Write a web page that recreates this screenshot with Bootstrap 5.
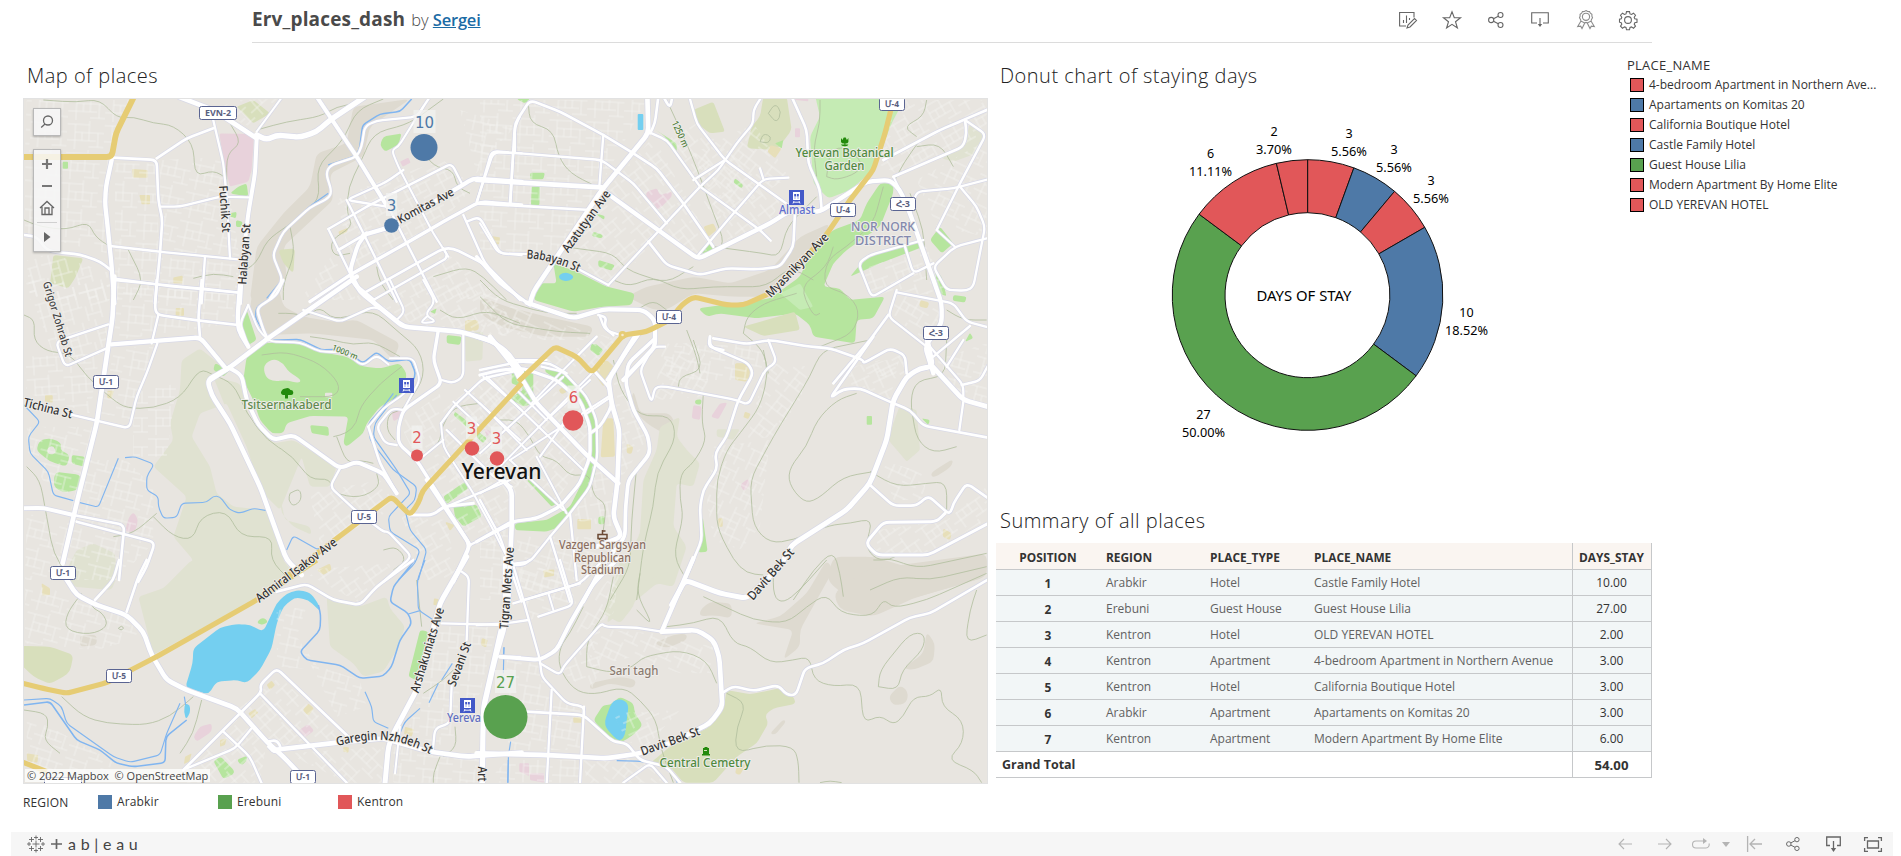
<!DOCTYPE html>
<html lang="en">
<head>
<meta charset="utf-8">
<meta name="viewport" content="width=device-width, initial-scale=1">
<title>Erv_places_dash</title>
<link href="https://cdn.jsdelivr.net/npm/bootstrap@5.3.0/dist/css/bootstrap.min.css" rel="stylesheet">
<style>
  body { font-family: "Open Sans", "Noto Sans", sans-serif; font-size: 12px; line-height: 18px; color: #333; height: 856px; overflow: hidden; }
  .dash-head { width: 1400px; height: 43px; margin-left: 252px; border-bottom: 1px solid #dcdcdc; padding-bottom: 3px; }
  .dash-title { font-size: 19px; font-weight: 700; color: #4a4a4a; letter-spacing: .15px; }
  .dash-by { font-size: 16.5px; font-weight: 300; color: #4a4a4a; }
  .dash-by a { color: #1b6ba5; font-weight: 600; letter-spacing: -.2px; }
  .tool { width: 44px; height: 24px; }
  svg { display: block; }
  .tool svg, .foot svg { fill: none; stroke: #666; stroke-width: 1.1; overflow: visible; }
  .left-col { width: 965px; margin-left: 23px; margin-right: 8px; }
  .sheet-title { font-size: 20px; font-weight: 300; color: #222; letter-spacing: .48px; height: 55px; padding: 20px 0 0 4px; line-height: 26px; margin: 0; }
  .map-box { width: 965px; height: 686px; background: #e8e5e0; overflow: hidden; }
  .ctl { left: 10px; width: 28px; background: rgba(247,247,247,.85); border: 1px solid #b9b9b9; box-shadow: 0 1px 2px rgba(0,0,0,.25); }
  .ctl svg { fill: none; stroke: #666; stroke-width: 1.3; }
  .ctl-find { top: 10px; height: 28px; }
  .ctl-zoom { top: 51px; height: 103px; }
  .credit { left: 2px; bottom: 2px; height: 13px; line-height: 13px; font-size: 11px; background: rgba(255,255,255,.75); color: #444; padding: 0 2px; white-space: pre; }
  .swatch { width: 14px; height: 14px; flex: none; }
  .sw-b { background: #4e79a7; } .sw-g { background: #59a14f; } .sw-r { background: #e15759; }
  .outlined { border: 1px solid #000; }
  .region-legend { height: 36px; color: #333; }
  .region-item { width: 120px; gap: 5px; letter-spacing: .15px; }
  .donut-col { width: 621px; }
  .name-legend { width: 264px; padding-top: 12px; margin-left: 10px; }
  .name-title { height: 20px; line-height: 20px; font-size: 13px; letter-spacing: .25px; font-weight: 500; }
  .name-legend .item { height: 20px; padding-left: 3px; gap: 5px; white-space: nowrap; }
  .summary-title { height: 43px; padding-top: 8px; }
  .sum-table { width: 655px; table-layout: fixed; border-collapse: collapse; font-size: 12px; color: #616161; }
  .sum-table tr { height: 26px; background: #f2f6f7; border-bottom: 1px solid #c6c8ca; }
  .sum-table tr > * { padding: 1px 0 0 6px; white-space: nowrap; }
  .sum-table tr > :last-child { border-left: 1px solid #c6c8ca; border-right: 1px solid #c6c8ca; text-align: center; padding-left: 0; color: #333; }
  .sum-table tr > .pos { text-align: center; padding-left: 0; }
  .sum-table thead tr { background: #faf5f1; }
  .sum-table thead tr > * { padding-top: 3px; }
  .sum-table th { color: #333; font-weight: 700; font-size: 11.9px; }
  .sum-table tfoot tr { background: #fff; }
  .foot { height: 24px; margin: 0 8px 0 11px; background: #f6f6f6; padding-left: 16px; }
  .foot-btn { width: 40px; }
  .off { opacity: .45; }
  .word { font-family: Lato, sans-serif; font-size: 16px; letter-spacing: 4.7px; color: #444; line-height: 24px; }
  #map text, #donut text { font-family: "Noto Sans", "Open Sans", sans-serif; }
  #map text.halo { paint-order: stroke; stroke: #efedea; stroke-width: 2px; stroke-linejoin: round; font-weight: 500; }
  #map text.mark-label { font-family: "DejaVu Sans", sans-serif; }
</style>
</head>
<body class="bg-white d-flex flex-column">

<header class="dash-head d-flex align-items-center justify-content-between flex-shrink-0">
  <div class="d-flex align-items-baseline" style="gap:6px">
    <span class="dash-title">Erv_places_dash</span>
    <span class="dash-by">by <a href="#">Sergei</a></span>
  </div>
  <div class="d-flex" style="margin-right:2px">
    <span class="tool d-flex align-items-center justify-content-center"><svg width="18" height="18" viewBox="0 0 18 18"><path d="M7 15H.6V1.500H15v5M4.500 12V9M7.500 12V4.500M10.500 9V7M8 17l1-3 6.500-6.500 2 2L11 16z"/></svg></span>
    <span class="tool d-flex align-items-center justify-content-center"><svg width="18" height="18" viewBox="0 0 18 18"><path d="M9 .8l2.300 6h6.200l-5 3.900 1.900 6.300L9 13.300 3.600 17l1.900-6.300-5-3.900h6.200z"/></svg></span>
    <span class="tool d-flex align-items-center justify-content-center"><svg width="16" height="16" viewBox="0 0 16 16"><circle cx="3.200" cy="8" r="2.600"/><circle cx="12.500" cy="3" r="2.500"/><circle cx="12.500" cy="13" r="2.500"/><path d="M5.500 6.800l4.800-2.600M5.500 9.200l4.800 2.600"/></svg></span>
    <span class="tool d-flex align-items-center justify-content-center"><svg width="18" height="16" viewBox="0 0 18 16"><path d="M6 11H.7V.7h16.600V11H12M9 6v8"/><path d="M6.800 12h4.400L9 15z" fill="#666" stroke="none"/></svg></span>
    <span class="tool d-flex align-items-center justify-content-center opacity-75" style="padding-left:4px"><svg width="18" height="19" viewBox="0 0 18 19"><circle cx="9" cy="6.800" r="3.600"/><path d="M9 .6l1.600.9 1.900.1.900 1.600 1.500 1.100v1.800l.6 1.700-1 1.600-.5 1.800-1.800.700-1.500 1.100L9 12.400l-1.700.6-1.500-1.100-1.800-.7-.5-1.800-1-1.600.6-1.700V4.300l1.500-1.100.9-1.600 1.900-.1zM4 11L.7 16.500l3-.3 1.300 2.300 3-6M14 11l3.300 5.500-3-.3-1.300 2.300-3-6"/></svg></span>
    <span class="tool d-flex align-items-center justify-content-center"><svg width="18" height="18" viewBox="0 0 18 18"><circle cx="9" cy="9" r="3.400"/><path d="M7.500.600h3l.5 2.300 1.500.600 2-1.300 2 2-1.300 2 .600 1.500 2.200.5v3l-2.200.5-.600 1.400 1.300 2.100-2 2-2-1.300-1.500.6-.5 2.300h-3L7 16.500l-1.500-.6-2 1.300-2-2 1.300-2.100-.6-1.400L.500 11.200v-3l1.700-.5.600-1.500-1.300-2 2-2 2 1.300L7 2.900z"/></svg></span>
  </div>
</header>

<main class="d-flex flex-shrink-0" style="height:789px">
  <section class="left-col">
    <h2 class="sheet-title">Map of places</h2>
    <div class="map-box position-relative">
      <svg id="map" width="965" height="686" viewBox="23 98 965 686"></svg>
      <div class="ctl ctl-find position-absolute d-flex align-items-center justify-content-center">
        <svg width="14" height="14" viewBox="0 0 14 14"><circle cx="8" cy="5.500" r="4.500"/><path d="M5 9l-3.800 3.500"/></svg>
      </div>
      <div class="ctl ctl-zoom position-absolute">
        <svg width="26" height="101" viewBox="0 0 26 101"><path d="M8 14h10M13 9v10M8 36h10" stroke-width="2.200" stroke="#777"/><path d="M6 58l7-6.500L20 58M8 57v7.500h10V57M11 64v-6h4v6"/><path d="M3 72.500h20" stroke="#d0d0d0" stroke-width="1"/><path d="M10 82v10l6.500-5z" fill="#666" stroke="none"/></svg>
      </div>
      <div class="credit position-absolute">© 2022 Mapbox  © OpenStreetMap</div>
    </div>
    <div class="region-legend d-flex align-items-center">
      <span style="width:75px;letter-spacing:.15px;padding-top:1px">REGION</span>
      <span class="region-item d-flex align-items-center"><i class="swatch sw-b"></i>Arabkir</span>
      <span class="region-item d-flex align-items-center"><i class="swatch sw-g"></i>Erebuni</span>
      <span class="region-item d-flex align-items-center"><i class="swatch sw-r"></i>Kentron</span>
    </div>
  </section>

  <section class="flex-grow-1">
    <div class="d-flex" style="height:457px">
      <div class="donut-col">
        <h2 class="sheet-title">Donut chart of staying days</h2>
        <svg id="donut" width="621" height="402" viewBox="996 98 621 402"></svg>
      </div>
      <div class="name-legend">
        <div class="name-title">PLACE_NAME</div>
        <div class="item d-flex align-items-center"><i class="swatch outlined sw-r"></i><span>4-bedroom Apartment in Northern Ave...</span></div>
        <div class="item d-flex align-items-center"><i class="swatch outlined sw-b"></i><span>Apartaments on Komitas 20</span></div>
        <div class="item d-flex align-items-center"><i class="swatch outlined sw-r"></i><span>California Boutique Hotel</span></div>
        <div class="item d-flex align-items-center"><i class="swatch outlined sw-b"></i><span>Castle Family Hotel</span></div>
        <div class="item d-flex align-items-center"><i class="swatch outlined sw-g"></i><span>Guest House Lilia</span></div>
        <div class="item d-flex align-items-center"><i class="swatch outlined sw-r"></i><span>Modern Apartment By Home Elite</span></div>
        <div class="item d-flex align-items-center"><i class="swatch outlined sw-r"></i><span>OLD YEREVAN HOTEL</span></div>
      </div>
    </div>
    <h2 class="sheet-title summary-title">Summary of all places</h2>
    <table class="sum-table">
      <colgroup><col style="width:104px"><col style="width:104px"><col style="width:104px"><col style="width:264px"><col style="width:79px"></colgroup>
      <thead><tr><th class="pos">POSITION</th><th>REGION</th><th>PLACE_TYPE</th><th>PLACE_NAME</th><th>DAYS_STAY</th></tr></thead>
      <tbody>
        <tr><th class="pos">1</th><td>Arabkir</td><td>Hotel</td><td>Castle Family Hotel</td><td>10.00</td></tr>
        <tr><th class="pos">2</th><td>Erebuni</td><td>Guest House</td><td>Guest House Lilia</td><td>27.00</td></tr>
        <tr><th class="pos">3</th><td>Kentron</td><td>Hotel</td><td>OLD YEREVAN HOTEL</td><td>2.00</td></tr>
        <tr><th class="pos">4</th><td>Kentron</td><td>Apartment</td><td>4-bedroom Apartment in Northern Avenue</td><td>3.00</td></tr>
        <tr><th class="pos">5</th><td>Kentron</td><td>Hotel</td><td>California Boutique Hotel</td><td>3.00</td></tr>
        <tr><th class="pos">6</th><td>Arabkir</td><td>Apartment</td><td>Apartaments on Komitas 20</td><td>3.00</td></tr>
        <tr><th class="pos">7</th><td>Kentron</td><td>Apartment</td><td>Modern Apartment By Home Elite</td><td>6.00</td></tr>
      </tbody>
      <tfoot><tr><th colspan="4" style="font-size:12.500px">Grand Total</th><th style="font-size:13.200px">54.00</th></tr></tfoot>
    </table>
  </section>
</main>

<footer class="foot d-flex align-items-center justify-content-between flex-shrink-0">
  <div class="d-flex align-items-center" style="gap:6px">
    <svg width="18" height="18" viewBox="0 0 18 18"><path d="M9 5.500v7M5.500 9h7M9 .5v4M7 2.500h4M9 13.500v4M7 15.500h4M2 7v4M0 9h4M16 7v4M14 9h4M4.500 2v5M2 4.500h5M13.500 2v5M11 4.500h5M4.500 11v5M2 13.500h5M13.500 11v5M11 13.500h5" stroke-width=".9"/></svg>
    <svg width="11" height="12" viewBox="0 0 11 12"><path d="M5.500 1v10M0 6h11" stroke-width="1.700"/></svg>
    <span class="word">ab|eau</span>
  </div>
  <div class="d-flex align-items-center">
    <span class="foot-btn off d-flex justify-content-center"><svg width="14" height="12" viewBox="0 0 14 12"><path d="M14 6H1M6 1L1 6l5 5"/></svg></span>
    <span class="foot-btn off d-flex justify-content-center"><svg width="14" height="12" viewBox="0 0 14 12"><path d="M0 6h13M8 1l5 5-5 5"/></svg></span>
    <span class="off d-flex justify-content-center" style="width:31px"><svg width="18" height="12" viewBox="0 0 18 12"><path d="M13 3H4a3.500 3.500 0 000 7h10a3.300 3.300 0 003-4.500"/><path d="M11 0l4 3-4 3z" fill="#666" stroke="none"/></svg></span>
    <span class="off d-flex justify-content-center" style="width:19px"><svg width="8" height="5" viewBox="0 0 8 5"><path d="M0 0h8L4 5z" fill="#666" stroke="none"/></svg></span>
    <span class="off d-flex justify-content-center" style="width:38px"><svg width="15" height="16" viewBox="0 0 15 16"><path d="M.6 0v16M15 8H3M8 3L3 8l5 5" stroke-width="1.300"/></svg></span>
    <span class="foot-btn d-flex justify-content-center"><svg width="14" height="16" viewBox="0 0 16 16" stroke-width="1.400"><circle cx="3.200" cy="8" r="2.600"/><circle cx="12.500" cy="3" r="2.500"/><circle cx="12.500" cy="13" r="2.500"/><path d="M5.500 6.800l4.800-2.600M5.500 9.200l4.800 2.600"/></svg></span>
    <span class="foot-btn d-flex justify-content-center"><svg width="15" height="16" viewBox="0 0 15 16"><path d="M4 9.500H.7V1h13.600v8.500H11M7.500 5v8" stroke-width="1.300"/><path d="M4.800 12h5.400l-2.700 4z" fill="#666" stroke="none"/></svg></span>
    <span class="foot-btn d-flex justify-content-center"><svg width="18" height="15" viewBox="0 0 18 15"><path d="M3.500 4h11v7h-11zM.6 4V.6H4M14 .6h3.400V4M17.400 11v3.400H14M4 14.400H.6V11" stroke-width="1.300"/></svg></span>
  </div>
</footer>

<script src="https://cdn.jsdelivr.net/npm/bootstrap@5.3.0/dist/js/bootstrap.bundle.min.js"></script>
<script>
// Map geometry is kept per sheet; one map pixel is three sheet units.
const sheets = { A:[0,0], B:[480,80], C:[0,280], D:[480,340], E:[0,560], F:[480,560] };
const parse = s => s.trim().split(/\s+/).map(p => p.split(',').map(Number));
// Polyline whose corners are rounded by radius r.
function trace(s, t, r, closed) {
  const o = sheets[t], p = parse(s).map(q => [o[0] + q[0] / 3, o[1] + q[1] / 3]), n = p.length;
  const toward = (a, b) => { const d = Math.hypot(b[0]-a[0], b[1]-a[1]) || 1, k = Math.min(r / d, .5); return [(a[0]+(b[0]-a[0])*k).toFixed(1), (a[1]+(b[1]-a[1])*k).toFixed(1)]; };
  let d = '';
  if (closed) { for (let i = 0; i < n; i++) { const c = p[i]; d += (i ? 'L' : 'M') + toward(c, p[(i+n-1)%n]) + 'Q' + c + ' ' + toward(c, p[(i+1)%n]); } return d + 'Z'; }
  d = 'M' + p[0];
  for (let i = 1; i < n-1; i++) d += 'L' + toward(p[i], p[i-1]) + 'Q' + p[i] + ' ' + toward(p[i], p[i+1]);
  return d + 'L' + p[n-1];
}
const C = { scrub:'#e0e2d1', shade:'#dedad0', park:'#b6e59e', light:'#c5ebb4', olive:'#d8dfbc', tan:'#e7dfb9', pink:'#e8d2db', land:'#e8e5e0', water:'#74cff0' };
const areas = [
 ['C','scrub',4,'545,240 600,205 680,270 625,310 700,440 780,600 850,830 860,900 560,900 580,840 520,770 560,650 460,560 520,480 510,430 540,330'],
 ['C','scrub',4,'640,290 720,310 750,420 820,490 880,480 1010,560 990,620 930,620 905,530 840,690 790,640 700,440'],
 ['C','scrub',4,'840,650 855,720 930,740 935,765 880,740 845,700'],
 ['C','land',3,'575,470 600,400 680,370 740,500 800,690 700,680 650,640 630,560'],
 ['E','scrub',4,'575,0 850,0 880,40 760,120 460,285 415,110 490,85'],
 ['E','scrub',4,'980,110 1080,140 1160,110 1170,145 1215,200 1190,270 1150,335 1090,350 1060,310 990,260'],
 ['C','scrub',4,'230,810 280,790 345,820 350,890 335,930 220,920 190,890'],
 ['E','shade',4,'240,225 290,225 290,255 240,260'],
 ['E','olive',5,'60,258 150,260 220,285 210,335 190,350 150,372 100,350 60,310'],
 ['A','olive',3,'160,765 250,775 225,835 205,865 150,850'],
 ['A','shade',6,'1230,297 1060,320 1040,430 950,460 930,560 850,640 770,740 750,900 830,900 860,830 850,740 1000,600 990,520 1090,470 1110,380'],
 ['A','olive',4,'835,750 885,745 880,820 850,790'],['A','olive',2,'710,320 760,300 810,340 760,370'],
 ['C','shade',6,'850,80 910,110 1000,125 1070,120 1200,190 1180,240 1120,180 940,160 800,165 750,90 760,10 830,0'],
 ['B','shade',6,'440,650 500,620 640,590 750,610 870,570 960,470 1050,430 1020,490 860,650 760,650 640,640 560,690 520,690'],
 ['B','shade',6,'0,650 80,680 200,710 340,740 330,770 200,770 60,740 0,700'],
 ['B','scrub',3,'1385,235 1450,200 1470,130 1510,160 1490,220 1420,245'],
 ['B','olive',3,'640,90 700,65 735,155 690,160 650,130'],['B','olive',4,'850,50 920,50 935,150 890,210 800,205 815,140 840,110'],
 ['B','light',4,'1005,45 1280,45 1235,130 1180,270 1110,330 1045,355 1000,310 990,170 1020,110'],
 ['B','park',4,'1200,310 1240,310 1240,340 1200,440 1100,510 1060,550 1030,620 1080,625 1110,660 1215,650 1180,715 1130,720 1125,790 1000,770 990,735 945,700 830,715 720,700 680,710 655,685 870,655 960,590 1000,500 1060,450 1140,420 1160,370'],
 ['B','olive',3,'790,740 945,695 960,750 850,768'],
 ['B','light',2,'900,640 960,610 1000,680 960,690'],
 ['B','park',3,'1135,560 1170,530 1330,480 1330,500 1200,550 1110,590'],['B','park',3,'1350,480 1380,440 1420,490 1385,520'],
 ['B','park',3,'1360,560 1385,590 1400,650 1380,640'],['B','park',2,'1420,645 1460,650 1455,668 1418,662'],['B','park',2,'1455,785 1470,758 1480,775'],
 ['B','park',4,'220,550 290,575 380,620 465,640 455,675 370,680 280,695 160,660 180,610 230,610'],
 ['B','park',2,'150,278 195,278 190,298 150,298'],['B','park',1,'155,320 180,320 178,375 153,375'],['B','park',2,'520,145 590,190 590,215 550,165'],['B','park',2,'355,540 405,555 395,572 355,560'],['B','park',2,'340,455 370,465 365,475 335,468'],['B','park',2,'650,525 690,490 700,510'],['B','park',2,'345,400 375,408 372,420'],['B','park',2,'765,295 790,315 785,325 760,308'],['B','park',1,'885,190 910,180 905,205'],['B','park',2,'110,57 150,57 135,70'],
 ['B','tan',2,'670,440 700,430 710,450 685,470'],['B','tan',2,'35,470 60,480 55,495 35,490'],['B','tan',2,'870,195 905,205 885,235 862,215'],['B','tan',2,'765,850 800,850 812,870 800,905 765,900'],['B','tan',2,'1320,660 1348,668 1342,685 1318,680'],
 ['B','pink',2,'500,335 530,325 540,345 575,335 575,350 535,390 520,370 498,350'],['B','pink',1,'945,145 960,145 960,172 945,172'],['B','pink',1,'945,50 985,50 985,64 945,60'],
 ['B','park',2,'345,790 370,810 355,826 330,808'],['B','park',2,'195,855 240,880 240,900 205,880'],['B','tan',2,'370,840 405,870 370,920 345,885'],
 ['A','park',3,'1150,410 1205,400 1195,435 1155,455 1140,435'],['A','park',1,'188,485 204,485 204,506 188,506'],['A','park',3,'690,580 715,560 740,550 745,590'],['A','park',2,'690,640 710,635 708,655 690,650'],['A','park',2,'708,660 728,665 725,680 708,682'],
 ['A','pink',2,'658,400 762,402 755,510 745,545 690,560 672,490'],['A','pink',1,'1200,485 1225,473 1232,488 1208,500'],
 ['A','tan',1,'396,507 443,510 443,533 398,533'],['A','tan',1,'418,585 450,585 450,613 425,613'],['A','tan',1,'520,832 548,827 548,850 520,850'],['A','tan',1,'1015,695 1045,683 1040,697 1018,705'],['A','tan',1,'1475,708 1500,712 1498,732 1478,728'],
 ['C','park',4,'740,230 780,190 900,185 960,215 1040,230 1090,260 1140,265 1200,250 1220,280 1210,340 1140,380 1100,430 1090,460 1040,500 1030,490 1045,410 930,408 860,430 850,460 815,460 780,420 760,360 730,300'],
 ['C','land',8,'790,255 820,235 850,250 865,275 905,300 895,310 860,300 820,305 795,290'],['C','land',1,'975,338 997,338 997,352 975,352'],
 ['C','park',3,'740,90 770,180 745,195 722,150'],['C','park',2,'645,250 690,270 670,290 640,270'],['C','park',2,'930,435 985,440 987,468 935,460'],
 ['C','park',5,'108,510 120,480 155,475 185,490 180,510 210,525 200,560 150,545'],['C','land',5,'140,505 160,495 170,520 145,525'],['C','park',2,'215,525 255,530 250,560 215,550'],['C','park',6,'165,575 245,585 235,630 190,638 160,620'],
 ['C','pink',4,'400,695 415,720 405,755 375,755 385,715'],['C','pink',3,'1175,395 1200,390 1213,405 1180,425'],
 ['C','tan',1,'135,345 158,345 158,368 135,365'],['C','tan',1,'322,332 342,332 335,357 322,355'],['C','tan',1,'527,84 552,84 552,107 527,107'],['C','tan',3,'1395,120 1435,120 1437,150 1395,155'],['C','scrub',2,'1395,155 1450,155 1447,240 1397,245'],
 ['C','park',2,'1340,165 1385,170 1380,195 1340,190'],['C','park',1,'1290,95 1310,85 1305,102'],
 ['C','park',2,'1330,650 1395,605 1405,625 1340,672'],['C','park',2,'1360,680 1430,675 1445,710 1390,740 1365,710'],['C','park',2,'1365,395 1410,430 1410,450 1360,405'],['C','park',2,'1430,450 1460,475 1450,490 1425,465'],['C','park',1,'1535,275 1560,275 1560,320 1535,310'],['C','tan',2,'1335,725 1365,735 1350,753'],['C','tan',2,'950,870 990,850 995,870 970,885'],['C','pink',2,'1452,445 1475,455 1460,470'],
 ['D','park',2,'95,90 160,90 160,190 130,200 90,175 130,150'],['D','park',3,'195,80 250,100 300,150 345,230 350,320 345,410 290,500 240,560 200,575 105,570 105,550 200,540 270,500 320,400 328,280 300,190 240,125 195,95'],
 ['D','park',2,'140,420 160,420 230,490 215,500'],['D','park',2,'335,10 370,30 355,48 330,30'],['D','park',2,'355,530 375,528 373,553 355,553'],['D','park',1,'0,280 20,295 10,305 0,300'],
 ['D','tan',2,'380,60 402,80 360,120 345,90'],['D','tan',2,'370,235 400,235 405,350 362,352'],['D','tan',1,'292,537 333,537 333,568 292,568'],['D','tan',1,'190,690 223,688 222,708 192,712'],['D','tan',2,'440,310 460,320 455,342 440,340'],['D','tan',2,'765,70 810,75 808,120 770,120'],['D','tan',1,'795,215 812,222 805,237 790,232'],['D','tan',1,'715,535 728,535 728,560 715,560'],['D','tan',2,'235,150 250,140 262,155 245,163'],['D','tan',2,'1390,565 1415,580 1410,600 1388,590'],
 ['D','shade',6,'460,150 480,220 570,220 590,260 550,280 500,250 450,200'],
 ['D','scrub',4,'540,260 600,230 590,290 620,330 660,370 640,440 590,430 580,560 620,620 580,740 530,730 470,780 380,850 420,700 480,580 490,420 530,330'],
 ['D','scrub',2,'1260,195 1310,210 1320,330 1280,365 1225,300 1240,250'],['D','scrub',2,'710,268 780,268 760,300 710,290'],
 ['D','pink',2,'640,195 665,200 660,240 635,235'],['D','pink',2,'720,190 742,188 715,238 693,230'],['D','pink',3,'780,435 805,415 808,435 793,455'],['D','park',1,'1160,228 1176,228 1176,254 1160,254'],['D','park',2,'645,180 665,178 663,194 645,192'],['D','park',2,'1325,235 1350,240 1345,255'],
 ['D','park',3,'668,530 675,580 683,635 655,638 665,600'],
 ['D','shade',8,'1350,400 1420,355 1415,380 1360,415'],['D','shade',8,'1180,650 1310,690 1520,640 1520,710 1350,760 1240,790 1190,750 1110,780 1040,720 1060,650'],
 ['F','shade',8,'1160,30 1260,15 1520,-20 1520,50 1300,115 1180,170 1080,150 1060,100'],['F','shade',6,'660,150 690,125 755,130 755,175 700,165 660,170'],['F','shade',6,'820,190 900,170 980,100 1040,0 1060,30 960,210 960,260 910,300 940,210'],['F','shade',6,'1340,215 1365,250 1360,305 1300,330 1270,325 1330,280'],['F','shade',6,'1225,410 1260,375 1285,395 1280,430 1240,437'],['F','shade',6,'520,250 580,225 620,220 620,240 560,265'],['F','shade',6,'330,370 420,350 470,360 460,385 390,370 330,390'],['F','shade',4,'870,520 910,478 918,485 885,525'],
 ['F','scrub',4,'460,40 560,0 600,0 580,30 480,70 460,140 420,190 370,160 400,80 420,0'],
 ['F','olive',4,'740,390 810,403 900,385 945,415 945,432 880,445 855,465 865,490 830,550 770,590 700,668 610,668 570,620 510,610 570,560 690,500 730,450'],
 ['F','park',4,'340,480 370,435 390,435 420,410 460,430 465,460 488,495 465,520 430,545 400,545'],['F','water',8,'395,425 420,416 447,430 440,480 435,530 415,545 370,495'],
 ['F','tan',1,'280,472 305,472 305,488 280,488'],['F','pink',1,'118,610 147,610 147,648 118,635'],['F','pink',1,'150,640 192,640 192,668 150,660'],['F','tan',2,'770,620 800,610 780,645 765,640'],['F','tan',1,'8,235 22,240 18,262 4,255'],
 ['B','water',1,'473,102 490,102 490,150 473,150'],['B','water',5,'235,585 260,575 285,590 265,605 240,600'],
 ['E','water',5,'580,265 660,203 710,192 750,195 790,215 830,130 860,100 895,90 930,98 955,130 962,155 925,120 885,112 850,140 830,190 815,265 780,330 740,370 710,360 650,365 625,403 556,382 578,310'],
 ['E','water',3,'555,430 570,435 570,460 558,478 552,455'],
 ['E','park',3,'640,603 662,590 703,632 700,643 670,657'],['E','park',3,'710,600 740,587 742,600 725,617'],['E','park',3,'775,180 790,172 805,185 790,195 772,190'],['E','park',3,'1260,210 1285,215 1250,360 1225,350'],
 ['E','pink',3,'580,530 600,500 635,490 635,515 590,545'],['E','pink',2,'895,512 925,492 942,512 915,532'],
 ['E','tan',1,'125,70 150,85 150,105 127,107'],['E','tan',1,'800,375 815,362 825,375 810,390'],['E','tan',2,'908,450 925,430 942,445 925,468'],['E','tan',1,'745,460 765,447 775,458 755,475'],['E','tan',1,'1215,500 1242,508 1235,530 1212,522'],['E','tan',1,'80,580 115,585 112,608 82,603'],['E','tan',1,'555,590 575,580 568,605 552,612'],['E','tan',1,'1302,115 1317,118 1315,137 1300,135'],['E','tan',1,'660,540 680,535 675,555 660,560'],['E','tan',1,'1445,235 1463,240 1458,262 1443,255'],['E','tan',1,'1030,560 1047,562 1045,578 1030,575']
];
// Residential blocks: sheet, street angle, outline
const blocks = [
 ['A',4,'75,480 330,480 320,760 75,700'],['A',3,'80,300 390,300 340,400 330,460 75,460'],['A',12,'480,480 670,470 690,590 720,780 480,750'],['A',3,'345,490 470,490 480,900 345,900'],['A',-42,'710,300 840,297 770,390 640,330'],
 ['A',-28,'1010,600 1120,550 1330,480 1420,560 1340,650 1200,740 1060,820'],['A',62,'900,900 1000,760 1045,850 1100,900'],['A',12,'1380,330 1545,380 1480,450 1430,520'],['A',-28,'1110,890 1340,760 1520,900'],['A',5,'480,770 715,790 715,900 470,900'],
 ['A',75,'80,780 150,760 330,820 330,900 90,900'],['C',75,'75,0 330,10 320,200 170,250'],['C',5,'345,20 715,40 700,130 345,180'],['C',-4,'75,230 300,220 270,400 80,340'],['C',10,'345,200 460,200 400,420 300,400'],
 ['C',0,'400,340 530,310 500,530 400,530'],['C',14,'80,440 280,440 220,690 150,640 85,520'],['C',14,'250,540 380,540 460,620 460,780 230,720'],['C',14,'80,700 460,790 350,900 75,900'],['C',-38,'930,640 1140,600 1190,680 1080,740 960,790 940,700'],
 ['C',-30,'1120,90 1380,0 1560,120 1560,170 1300,150'],['C',60,'1200,430 1320,340 1330,480 1250,540'],['C',-40,'1330,390 1450,290 1560,350 1560,480 1480,600 1340,600'],['C',-30,'1240,500 1560,600 1500,800 1400,790'],['C',-30,'1200,700 1340,720 1370,890 1280,900'],
 ['B',3,'0,60 500,60 360,320 0,290'],['B',3,'0,310 360,330 250,510 0,520'],['B',-40,'260,500 370,350 560,470 380,620'],['B',52,'380,330 520,170 700,500 650,530'],['B',52,'560,180 650,130 900,360 870,430 740,480'],['B',38,'640,220 820,130 930,290 720,420'],['B',-30,'1240,60 1520,60 1520,170 1250,280 1190,250'],['B',25,'1310,300 1520,180 1520,470 1370,440'],['B',-20,'1140,570 1340,500 1400,640 1180,650'],['B',30,'1240,640 1400,680 1340,790 1230,700'],
 ['B',45,'130,860 420,760 350,890'],['B',25,'10,620 200,720 420,780 200,780 0,760'],['B',10,'550,800 860,790 850,900 560,900'],['B',-30,'1080,870 1280,820 1280,900'],
 ['D',-45,'0,110 130,90 330,220 320,350 230,480 100,430 0,360'],['D',-20,'400,100 440,150 500,300 420,420'],['D',15,'110,590 400,590 420,620 300,740 120,760'],['D',80,'340,370 410,430 400,560 280,540'],['D',-60,'550,10 670,10 690,170 520,180'],['D',38,'860,70 990,80 960,180 880,290 800,300'],['D',-65,'700,320 870,300 840,560 780,630 700,600 680,480'],['D',-25,'1100,90 1260,50 1230,180 1120,150'],['D',25,'1200,360 1340,400 1330,480 1240,480'],['D',-35,'1190,570 1400,540 1520,440 1520,540 1340,640 1180,640'],['D',15,'1370,60 1520,10 1520,190 1440,170'],
 ['D',5,'0,600 90,560 90,780 0,780'],['F',10,'80,300 170,310 220,400 310,450 300,570 80,570'],['F',25,'380,210 520,220 700,260 700,340 600,340 460,290 340,320 320,260'],['F',70,'240,330 360,200 360,330 330,400'],['F',-25,'400,460 600,450 500,560 440,545'],['F',3,'80,600 300,600 300,668 20,668'],['F',40,'310,600 470,590 560,668 320,668'],['F',18,'100,10 240,0 290,130 150,180'],['F',-60,'340,110 420,20 400,160 270,240'],
 ['E',15,'75,70 200,100 380,170 430,230 290,270 75,250'],['E',18,'80,480 150,500 330,600 400,660 80,620'],['E',-42,'840,350 1030,540 830,560 710,450'],['E',-42,'560,640 700,470 800,550 780,668 560,668'],['E',12,'830,150 920,140 890,230 960,330 830,320'],['E',15,'930,310 1080,360 1100,440 1010,470'],['E',45,'860,580 1150,560 1150,668 1040,668'],['E',5,'1180,560 1440,590 1440,668 1180,668'],['E',5,'1320,200 1490,200 1440,400 1340,560 1220,520'],['E',-35,'900,30 1180,10 1080,130']
];
const contours = [
 ['A','130,300 230,307 300,297 350,355 400,350 460,370 520,375 580,430 585,530 640,510 680,535'],['A','690,370 725,430 680,460 680,560'],['A','72,660 120,680 200,690 265,665 285,710 330,740'],['A','770,390 860,365 960,350 1010,320 1070,310'],['A','1330,297 1230,370 1120,400 1080,490 1045,560 1040,640 1060,680 990,720 1000,770 1050,760'],['A','720,820 770,790 800,720 860,680 960,600 950,500 1030,420 1070,330 1150,297'],['A','380,740 430,840 400,900'],['A','580,835 640,820 700,830'],['A','1260,440 1300,500 1360,510 1370,560 1410,580'],['A','870,680 885,760 850,850 850,900'],['A','1130,800 1140,850 1180,900'],['A','1300,830 1400,800 1450,830 1520,900'],
 ['C','72,105 105,120 100,180 140,215 210,220 260,290 340,360 380,385 460,385 540,355 600,265 640,285 700,310 740,400 800,480 880,530 930,600 990,595 1000,640 1080,655 1140,620 1130,580'],['C','460,710 520,770 580,780 600,710 680,690 720,770 820,770 810,840 870,900'],['C','870,640 900,625 905,660 880,680 865,660 870,640'],['C','470,700 400,760 340,770'],['C','835,100 880,100 920,110 960,80 1000,120 1120,90 1200,160 1260,210 1275,290 1210,390 1165,400 1160,450 1185,480'],['C','930,170 1000,180 1060,195 1120,185 1200,230'],['C','785,225 860,215 960,250 1020,310 1010,350 900,350'],['C','1000,470 1040,460 1070,430 1080,380 1140,310 1205,260'],['C','1010,470 1040,550 1080,540 1120,550'],['C','1255,540 1320,490 1325,440 1360,380 1440,370'],['C','80,560 120,600 140,710 160,820 210,900'],['C','1320,90 1370,120 1460,90 1560,130'],['C','1150,810 1190,800 1220,840 1180,870'],
 ['B','145,70 150,130 220,150 235,230 270,280 350,320'],['B','560,60 620,190 660,290 700,400 735,490 700,520'],['B','0,600 60,660 200,700 290,700'],['B','0,650 80,730 230,755 330,760'],['B','400,600 450,620 520,590 600,630 700,620 860,620 930,560 1000,600'],['B','250,500 400,520 440,570 560,610 640,560'],['B','700,500 850,520 900,530 920,440 1010,350'],['B','1020,60 1020,130 1000,200 1010,290'],['B','1040,290 1050,210 1100,200 1150,250 1130,280 1070,300 1040,290'],['B','1210,320 1180,430 1100,500 1040,540 1030,620 1100,640 1140,690 1120,760 1020,800'],['B','1060,500 1040,560 960,620 1000,710 1020,700'],['B','1340,60 1330,110 1270,140 1310,170'],['B','1320,180 1270,250 1240,310'],['B','865,100 885,70 905,95 890,130 865,100'],['B','840,185 850,160 875,170 865,190 840,185'],['B','790,760 800,710 850,670 950,640'],['B','790,760 850,810 865,880'],['B','1310,200 1380,190 1420,260'],['B','1290,340 1330,450 1340,600'],['B','560,690 520,660 470,690'],['B','620,750 650,830 660,880'],['B','1520,720 1450,720 1400,690'],
 ['D','1170,0 1025,30 990,110 880,290 810,420 820,560 870,610 940,600 1050,555 1110,550 1180,535 1155,620 1190,660 1230,655 1310,685 1520,640'],['D','1180,395 1090,410 1010,480 970,487 925,430 930,380 980,320 1010,240 1070,180 1130,160'],['D','1170,395 1250,440 1340,430 1400,425 1400,510'],['D','1400,0 1395,110 1310,120 1290,180 1310,300 1360,340 1430,320'],['D','60,240 110,240 150,290 180,350 230,360 270,410 330,400 340,470 380,490 370,570'],['D','400,60 420,150 480,230 570,225 590,290 530,400 520,500 490,620 470,780'],['D','640,0 670,90 600,110 595,140'],['D','670,160 665,250 680,300 640,370 600,400 600,480 610,530 580,650 620,720'],['D','850,30 865,100 840,200 780,280 740,330 710,420 710,560 760,660 800,700 850,705'],['D','470,380 455,540 450,680 390,780'],['D','1520,680 1350,720 1260,710 1170,750'],['D','940,780 1000,690 1060,630 1080,700 1090,770'],
 ['F','310,140 270,220 240,260 235,320 280,390 340,405 430,380 480,420 530,480 540,560 580,668'],['F','320,320 320,240 380,150 400,50'],['F','320,320 400,340 460,320 490,290 600,270 680,300 710,370'],['F','560,200 640,190 720,165 760,250 810,260 870,310 940,300 990,290 1000,360 1060,380 1140,370 1150,490 1200,465 1240,495 1270,470 1300,410 1350,410 1385,380 1385,440 1450,480 1450,550 1400,600 1480,630 1505,668'],['F','1195,380 1200,330 1290,220 1335,220 1330,270 1265,330 1255,390 1195,380'],['F','740,400 800,430 770,500 765,580 860,555 940,560 955,600 957,668'],['F','1490,90 1470,150 1455,250 1520,225'],['F','670,110 820,180 920,190 980,140 1040,100 1080,160 1180,170 1210,115 1240,145 1340,120 1520,40'],['F','880,20 880,110 910,130 960,90 1040,0'],['F','470,150 520,200 470,100 480,40'],['F','1020,668 1050,662 1085,668'],['F','1180,0 1230,0 1260,-20'],
 ['E','245,100 200,160 195,210 270,225 325,200 310,160 270,140 290,110'],['E','185,410 250,470 320,490 440,495 510,470 580,410'],['E','72,450 140,460 145,500 130,540 180,580'],['E','605,420 580,520 540,580'],['E','1250,60 1265,200'],['E','1360,330 1330,360 1270,400'],['E','1320,590 1300,640 1300,668'],['E','1365,500 1370,560 1330,590'],['E','355,205 365,197 372,205 363,211 355,205']
];
const rivers = [
 ['A',4,'1235,297 1200,335 1140,342 1088,375 1078,450 1060,470 985,495'],['A',3,'985,580 930,618 850,692 818,760 845,840 800,895'],['C',3,'845,0 825,45 770,80 765,110 795,165'],['C',4,'820,181 900,178 965,210 1035,207 1088,250 1130,216 1165,245 1230,238 1247,280 1240,300'],['C',3,'1180,340 1150,380 1105,430 1110,480 1180,570 1250,620 1245,660 1215,690 1230,750 1280,810 1255,900'],['C',3,'1190,345 1125,430 1120,470 1190,570 1232,640 1165,710 1170,755 1260,810 1245,850 1195,900'],
 ['C',3,'72,375 120,425 85,470 90,520 145,575 160,645 220,662'],['C',3,'240,668 295,682 355,535'],['C',3,'375,533 405,530 462,553 440,590 440,630 475,650 475,680 490,715 530,712 545,670 620,667 640,648 660,650 690,690 720,700 760,685 800,692'],['C',3,'860,810 880,767 955,810 1000,780'],
 ['E',3,'72,420 150,415 185,440 200,490 340,590 390,607 480,585 500,520 540,430'],['E',4,'72,435 150,425 230,540 300,570 350,610 400,620 495,608 498,530 560,480'],['E',4,'955,135 962,165 960,210 900,275 920,300 1020,315 1080,355 1150,348 1175,320 1200,240 1235,190 1225,160 1170,125 1180,80 1245,0'],['E',3,'1275,0 1252,60 1255,150 1300,180'],['E',3,'1225,162 1260,152'],['E',3,'1095,395 1115,440 1120,485 1165,505'],['E',3,'1200,520 1215,485 1260,445'],['E',3,'1357,310 1325,360'],['E',3,'1315,370 1287,428'],['E',3,'1512,262 1510,290'],['E',3,'1525,600 1523,668'],['E',3,'553,410 557,435'],
 ['F',3,'72,262 70,340'],['F',3,'92,545 85,590 84,668'],['F',3,'410,602 480,604 540,615 575,630 592,668']
];
const yellow = [
 ['A',16,'60,471 335,471 348,400 402,290'],['C',14,'840,905 1175,650 1230,705 1255,670 1268,632 1565,310'],['B',14,'1235,80 1215,160 1180,270 1110,360 1035,470 870,640 790,675 740,675 640,650 605,675 570,720 500,755 430,765 335,878 290,830 225,800 115,905'],['E',14,'60,368 130,385 200,400 320,368 470,290 770,120 950,0'],['E',14,'60,603 140,635']
];
const roads = [
 ['A',13,'335,480 318,560 315,610 325,700 335,800 343,910'],['C',14,'343,-10 338,110 320,230 290,430 230,670 188,850'],['E',14,'188,40 230,105 290,135 380,165 430,215 455,285 500,360 560,390 710,445 800,545 850,590 930,675'],
 ['A',14,'535,290 640,330 770,415'],['A',12,'770,415 765,520 745,640 728,780 720,910'],['C',13,'722,-10 713,110 715,150 745,200'],['A',16,'770,405 800,420 830,405 900,412 950,395 990,360 1095,290'],['A',12,'950,290 1070,470 1165,625'],['A',6,'770,395 845,293'],['A',8,'640,385 560,415 470,475'],['A',8,'340,473 470,480 475,600 487,660 480,760 465,910'],['A',7,'635,340 670,490 680,590 690,775'],['A',7,'480,620 540,620 660,590 745,592'],['A',7,'330,738 480,755 715,778'],['A',7,'340,835 520,860 715,878'],['A',7,'615,770 605,910'],['A',8,'72,705 110,710 140,750 180,758 240,763 300,785 330,808'],
 ['A',7,'1290,290 1250,350 1130,362 1095,378 1085,440 1070,470 990,497 978,520 995,575 985,595 930,622 850,695 818,765 848,840 810,895'],['A',6,'1270,320 1195,440 1175,450 1195,500 1300,700 1345,770'],['A',13,'1090,705 1175,680 1380,560 1420,535 1565,546'],['A',8,'1015,750 1100,700'],['A',10,'930,905 1050,825 1200,740 1330,665 1440,605 1565,615'],['A',12,'1100,700 1075,730 1050,810 1060,850 1120,900'],['A',7,'985,687 1050,820'],['A',7,'1160,620 1040,600 1160,545 1210,510'],['A',7,'985,687 1100,620 1355,490 1385,550'],['A',7,'1040,600 1100,720 1190,905'],['A',7,'1160,610 1200,690 1310,905'],['A',7,'1430,605 1480,457 1565,460'],['A',6,'1540,460 1532,610'],['A',7,'1390,645 1455,790 1560,900'],['A',8,'1090,880 1330,745 1360,745 1450,790 1565,900'],['A',7,'1120,900 1345,772 1330,745'],['A',7,'1400,665 1438,650 1500,760 1565,765'],['A',6,'1560,350 1545,380 1545,457'],
 ['C',12,'60,685 130,684 220,705'],['C',8,'220,705 373,735 357,900'],['C',8,'230,725 465,787 440,860 415,905'],['E',8,'285,120 340,60 357,0'],['E',8,'380,155 415,50 440,0'],['C',13,'335,193 600,172 680,268'],['C',14,'630,300 690,262 800,178 1070,-10'],['C',14,'690,262 622,300 635,345 690,430 780,620 860,840 905,885'],['C',12,'690,265 725,285 740,360 775,435 820,480 880,465 1020,565 1070,545 1150,580 1190,640'],['C',8,'470,0 465,90 475,105 600,122 715,135'],['C',7,'475,105 455,190'],['C',7,'472,190 440,280 410,350 388,445 210,403'],['C',8,'605,0 595,110 600,172'],['C',7,'340,0 600,25 720,38'],['C',7,'325,133 168,185 195,260 320,205'],
 ['C',14,'1055,-10 1080,35 1210,140 1380,155 1470,180 1520,215 1565,275'],['C',10,'1315,150 1300,240 1325,310 1210,390 1195,440 1195,490 1250,540 1300,620 1410,795'],['C',12,'1280,600 1410,795 1360,905'],['C',7,'1325,300 1360,310 1390,290 1390,165'],['C',7,'1210,390 1175,385 1130,440 1155,490 1190,495'],['C',8,'1105,440 1140,550 1190,640'],['C',7,'745,75 720,130 745,200'],['C',6,'745,75 775,150 810,185 900,187 960,215 1035,217 1088,258 1130,225 1165,253'],['C',6,'1170,235 1240,235 1260,300 1210,390'],['C',6,'1240,300 1215,340 1150,385 1105,440'],['C',8,'850,0 830,45 770,85 790,150 805,180'],['C',9,'1230,705 1300,705 1330,680 1420,670'],['C',7,'1340,680 1530,600'],['C',7,'1410,795 1540,730'],['C',7,'1020,565 990,620 1065,690 1150,755 1165,755 1235,830 1150,905'],['C',7,'910,90 1020,125 1120,80 1150,90'],['C',6,'1280,110 1260,130 1310,125 1275,105 1305,65 1270,0'],['C',6,'1170,0 1215,95 1190,120'],
 ['C',7,'1323,430 1360,380 1450,295 1560,270'],['C',6,'1323,430 1330,500 1420,640 1480,750 1515,820'],['C',6,'1395,330 1560,480'],['C',6,'1450,290 1565,390'],['C',6,'1360,365 1440,440'],['C',6,'1250,545 1330,480'],['C',7,'1340,450 1480,590 1535,620'],
 ['B',12,'-10,770 50,790 95,850 120,900'],['B',7,'0,870 120,845 210,850 260,880'],['B',6,'90,840 200,840'],
 ['D',13,'30,-10 110,90 170,190 320,345 415,430'],['D',10,'0,105 60,90 130,85 230,120 300,180 330,260 330,350 300,430 240,500 170,535 95,545 -10,605'],['D',7,'185,80 250,95 320,170 350,240 352,350 330,440 270,520 210,590 150,665 95,672'],['D',6,'0,340 250,110'],['D',6,'40,400 335,100'],['D',6,'90,360 385,170'],['D',6,'180,350 250,250'],['D',6,'20,110 310,390'],['D',6,'0,190 140,330'],['D',6,'110,150 200,240'],['D',6,'170,350 260,520'],['D',6,'90,360 250,510'],['D',6,'0,460 60,425'],['D',6,'155,190 240,100 280,60'],['D',6,'210,230 330,120'],
 ['D',14,'465,-10 385,120 395,190 418,270 412,430 400,530 425,590 350,620'],['D',9,'340,90 390,145 395,200 360,260 330,280'],['D',11,'520,0 445,70 437,130 460,210 505,290 510,340 445,420 437,500 435,590 360,690 310,785'],['D',6,'395,170 320,220'],
 ['D',14,'60,410 95,450 95,560 85,785'],['D',7,'0,480 60,590 125,785'],['D',7,'270,520 290,720'],['D',7,'210,590 270,785'],['D',7,'130,780 300,730 400,630'],['D',7,'555,20 520,20 480,90 515,188 525,140 560,140 770,180 805,195 855,90 890,65 865,0'],
 ['D',8,'690,-10 690,20 805,70 820,100 775,180 740,290 705,340 712,385 670,450 660,500 665,600 615,720'],['D',8,'700,-5 800,12 870,0 990,20 1050,25 1150,60 1150,70 1230,25 1275,45 1280,100'],['D',8,'1180,-10 1050,175 1090,147 1140,145 1240,190 1290,210 1330,257 1520,292'],['D',15,'1340,-10 1358,80 1320,85 1280,110 1240,180 1220,300 1170,430 1100,510 935,615 900,680 800,775 720,760 615,720 575,795'],['D',14,'1358,80 1450,180 1530,202'],['D',7,'1400,80 1450,0'],['D',7,'1450,185 1438,270'],['D',7,'1350,20 1450,135 1450,180'],['D',7,'1445,135 1500,122 1525,75'],['D',8,'1170,435 1240,497 1310,497 1345,467 1410,525 1420,490 1460,430 1525,475'],['D',9,'1395,520 1370,545 1210,547 1157,610 1190,645 1345,645 1525,550'],
 ['F',13,'640,-5 545,215'],['F',14,'545,215 650,210 700,240 718,290 727,440 690,490 570,550 480,580 380,595 200,585 -10,580'],['F',7,'545,215 470,203 375,200 365,190 250,320 240,345 180,310'],['F',7,'95,0 130,120 180,300 185,350 260,430 312,440 312,465'],['F',12,'60,290 180,300 230,270 270,190 340,70 420,-10'],['F',8,'140,455 310,465 400,545 440,550 480,600 560,620 600,668'],['F',7,'215,390 205,580 200,670'],['F',7,'312,440 300,670'],['F',14,'75,-5 75,195 45,300 10,450 5,670'],['F',7,'-10,195 80,190 145,180'],['F',7,'100,130 300,70'],['F',7,'240,0 280,135 175,170'],['F',6,'205,100 220,150'],['F',8,'725,400 760,378 820,393 895,375 920,405 948,405 975,325 1030,310 1090,270 1150,250 1290,172 1350,160 1525,58'],['F',7,'430,668 510,610 560,668'],['F',8,'95,15 130,15 150,0'],
 ['E',8,'830,95 920,72 1000,120 1080,135 1130,80 1240,0'],['E',15,'1400,-10 1320,130 1250,390 1180,520 1165,560 1155,670'],['E',7,'1385,35 1407,50 1400,240'],['E',7,'1325,190 1515,195'],['E',7,'1355,375 1350,490 1305,505 1298,575'],['E',14,'1505,200 1450,440 1448,670'],['E',14,'820,570 1010,548 1150,535 1290,575 1400,590 1565,578'],['E',8,'550,630 785,395 780,375 830,325 1050,535'],['E',7,'780,400 1040,668'],['E',7,'670,515 750,590 785,670'],['E',7,'560,625 705,565 755,505'],['E',8,'805,545 830,540 845,565 825,580 805,560'],['E',6,'1500,290 1560,290'],['E',6,'1185,640 1200,500'],
 ['B',14,'502,45 505,160 365,330 160,635 150,670'],['B',8,'535,50 525,130 510,160'],['B',8,'550,50 570,85 577,50'],['B',14,'-10,300 365,322'],['B',13,'375,335 655,537 870,430 925,395 1020,395 1160,305 1230,300 1260,330 1290,400 1385,670 1385,730 1335,800 1360,880'],['B',13,'140,668 280,715 370,688 490,690 525,720 525,800 430,900'],['B',8,'90,370 105,130 150,60 240,95 370,165 460,220 530,265 610,370 700,500'],['B',7,'-10,370 35,213 365,240 460,310 560,430'],['B',7,'370,165 358,320'],['B',8,'-10,370 330,390'],['B',7,'510,158 560,180 660,320'],['B',7,'735,240 640,300'],['B',7,'660,320 840,450 872,482'],['B',7,'385,615 660,320 715,270 770,190 820,130 820,90 845,50'],['B',7,'628,50 650,130 735,240 925,375'],['B',7,'655,525 735,430 850,297 925,293'],['B',7,'850,297 840,265'],['B',7,'300,570 385,615'],['B',6,'0,430 55,520 140,522'],['B',8,'935,50 980,150 985,250 1020,330 1025,390'],['B',8,'945,395 940,500 900,560 830,568 740,565 660,585 560,555 505,485'],['B',10,'-10,530 60,610 150,675'],['B',7,'360,710 375,750 430,768'],['B',8,'355,705 380,712 372,740 400,765'],['B',7,'350,770 290,830'],['B',8,'480,760 380,900'],
 ['B',8,'1240,290 1450,200 1460,160 1455,120'],['B',8,'1210,240 1380,150 1450,120 1525,88'],['B',7,'1455,120 1518,163 1435,320 1370,450'],['B',7,'1290,400 1310,335 1420,325 1525,298'],['B',7,'1440,320 1490,380 1515,440 1480,620 1460,632 1400,630 1360,560 1425,500 1520,475'],['B',6,'1370,450 1425,500'],['B',7,'1300,580 1175,652 1135,550 1170,525 1330,480'],['B',7,'1360,550 1300,580 1275,500'],['B',7,'1250,630 1225,710 1340,800'],['B',7,'1250,637 1420,670 1460,725 1525,742'],['B',7,'1360,830 1470,738'],['B',8,'1225,705 1170,780 1060,910'],['B',6,'1240,290 1275,360'],['B',8,'690,770 685,800 730,810']
];
const NS = 'http://www.w3.org/2000/svg';
const map = document.getElementById('map');
function add(parent, tag, attrs, text) { const e = document.createElementNS(NS, tag); for (const k in attrs) e.setAttribute(k, attrs[k]); if (text != null) e.textContent = text; parent.appendChild(e); return e; }
const layer = a => add(map, 'g', a || {});
const defs = add(map, 'defs', {});
const angles = [...new Set(blocks.map(b => b[1]))];
angles.forEach((a, i) => {
  const p = add(defs, 'pattern', { id: 'st' + i, width: 37, height: 29, patternUnits: 'userSpaceOnUse', patternTransform: `rotate(${a})` });
  add(p, 'path', { d: 'M0 4H22M8 12H37M0 20H29M22 26H37M8 4V29M22 0V20M31 12V26M15 12V20', fill: 'none', stroke: '#f6f5f3', 'stroke-width': .85 });
});
const gA = layer(), gBlk = layer({ opacity:.8 }), gCon = layer({ fill:'none', stroke:'#b0be9d', 'stroke-width':.8 }), gRiv = layer({ fill:'none', stroke:'#80b5f0' });
const gCase = layer({ fill:'none', stroke:'#d8d9e7', 'stroke-linejoin':'round' }), gRoad = layer({ fill:'none', stroke:'#fff', 'stroke-linecap':'round', 'stroke-linejoin':'round' }), gYel = layer({ fill:'none', stroke:'#e6cc74' });
areas.forEach(a => add(gA, 'path', { d: trace(a[3], a[0], a[2], true), fill: C[a[1]] }));
blocks.forEach(b => add(gBlk, 'path', { d: trace(b[2], b[0], 1, true), fill: `url(#st${angles.indexOf(b[1])})` }));
contours.forEach(c => add(gCon, 'path', { d: trace(c[1], c[0], 14) }));
rivers.forEach(r => add(gRiv, 'path', { d: trace(r[2], r[0], 4), 'stroke-width': r[1] / 2.6 }));
roads.forEach(r => { const d = trace(r[2], r[0], 6); add(gCase, 'path', { d, 'stroke-width': r[1] / 3 + 1.4 }); add(gRoad, 'path', { d, 'stroke-width': r[1] / 3 }); });
yellow.forEach(r => add(gYel, 'path', { d: trace(r[2], r[0], 5), 'stroke-width': r[1] / 3 + .5 }));
add(gYel, 'circle', { cx: 622.500, cy: 335, r: 2.600, fill: '#f4ead0', 'stroke-width': 2.600 });

// Street and place names: text, centre x, centre y, angle, size, colour, drawn width
const names = layer();
[['Komitas Ave',425.500,205.500,-28,12,'#333',62],['Fuchik St',225,209,86,12,'#333',47],['Halabyan St',244,254,-86,12,'#333',61],['Grigor Zohrab St',58,319,73,11,'#444',78],
 ['Tichina St',48,408,14,12.500,'#333',50],['Azatutyan Ave',586,221,-54,12.500,'#333',73],['Myasnikyan Ave',797,265,-46,12.500,'#333',84],['1250 m',680.500,134,65,9.500,'#4a7a35',28],
 ['1000 m',345,352,22,8,'#4a7a35',27],['Admiral Isakov Ave',296,570,-37,12.500,'#333',98],['Arshakuniats Ave',427,650,-73,12.500,'#333',88],['Sevani St',459,664,-70,12.500,'#333',46],
 ['Tigran Mets Ave',506.500,588,-86,12.500,'#333',82],['Davit Bek St',770.500,574,-49,12.500,'#333',64],['Davit Bek St',670,741,-20,12.500,'#333',62],['Art',482,774,90,12.500,'#333',15],
 ['Yerevan Botanical',844.500,152,0,12.500,'#4f8a3e',98],['Garden',844.500,165.500,0,12.500,'#4f8a3e',40],['Almast',797,209.500,0,12.500,'#5f6fd0',36],['NOR NORK',883,226.500,0,12.500,'#8288ad',64],['DISTRICT',883,240.500,0,12.500,'#8288ad',56],
 ['Tsitsernakaberd',286.500,404.500,0,12.500,'#5f8a4e',90],['Vazgen Sargsyan',602.500,545,0,12,'#8a6d60',87],['Republican',602.500,557.500,0,12,'#8a6d60',57],['Stadium',602.500,569.500,0,12,'#8a6d60',43],
 ['Sari tagh',634,670.500,0,12.500,'#8b7b70',49],['Central Cemetry',705,762.500,0,12.500,'#4f8a3e',91],['Yereva',464,717.500,0,12.500,'#5f6fc0',34]
].forEach(([t,x,y,a,s,c,w]) => add(names, 'text', { class:'halo', x:0, y:s*.36, 'font-size':s, fill:c, 'text-anchor':'middle', textLength:w, lengthAdjust:'spacingAndGlyphs', transform:`translate(${x} ${y}) rotate(${a})` }, t));
add(defs, 'path', { id:'garegin', d:'M337 746Q372 737 393 741T433 756' });
const gg = add(names, 'text', { class:'halo', 'font-size':12.500, fill:'#333' });
add(gg, 'textPath', { href:'#garegin', textLength:96, lengthAdjust:'spacingAndGlyphs' }, 'Garegin Nzhdeh St');
add(defs, 'path', { id:'babayan', d:'M526.500 258.500Q550 259 580 273' });
const bb = add(names, 'text', { class:'halo', 'font-size':12.500, fill:'#333' });
add(bb, 'textPath', { href:'#babayan', textLength:54, lengthAdjust:'spacingAndGlyphs' }, 'Babayan St');
add(names, 'text', { x:501.500, y:478.500, 'font-size':21, fill:'#111', 'text-anchor':'middle', textLength:80, lengthAdjust:'spacingAndGlyphs', class:'halo' }, 'Yerevan');

// Road shields
[['EVN-2',218,113,37],['Մ-1',106,382,25],['Մ-1',63,573,25],['Մ-5',364,517,25],['Մ-5',119,676,25],['Մ-1',303,777,25],['Մ-4',892,104,25],['Մ-4',843,210,25],['Մ-4',669,317,25],['Հ-3',903,204,25],['Հ-3',936,333,25],['',63,784,37]]
.forEach(([t,x,y,w]) => { add(names,'rect',{x:x-w/2,y:y-6.500,width:w,height:13,rx:2,fill:'#fff',stroke:'#5a6492','stroke-width':1}); if (t) add(names,'text',{x,y:y+3.300,'font-size':9,'font-weight':700,fill:'#5a6080','text-anchor':'middle',textLength:t.length>3?w-11:14,lengthAdjust:'spacingAndGlyphs'},t); });
// Rail stations
[[796.500,197.500],[406.500,385.500],[467.500,705.500]].forEach(([x,y]) => { add(names,'rect',{x:x-7.500,y:y-7.500,width:15,height:15,fill:'#4359c8'}); add(names,'path',{d:`M${x-3.500} ${y-5.500}h7v8h-7z`,fill:'#fff'}); add(names,'path',{d:`M${x-2.300} ${y-3.500}h1.900v2.500h-1.900zM${x+.4} ${y-3.500}h1.900v2.500h-1.900zM${x-2} ${y}h1v1h-1zM${x+1} ${y}h1v1h-1z`,fill:'#4359c8'}); add(names,'path',{d:`M${x-3.500} ${y+6}l1-2.500M${x+3.500} ${y+6}l-1-2.500M${x-3} ${y+4.700}h6`,fill:'none',stroke:'#fff','stroke-width':.9}); });
// Park, flower, cemetery and stadium symbols
add(names,'path',{d:'M285 398.500v-3.500h-2a2.500 2.500 0 01-1.500-4 4 4 0 014-2.500 4 4 0 015 1.500 2.500 2.500 0 01.500 5h-3v3.500z',fill:'#238a0c'});
add(names,'path',{d:'M841 138l1.500 2 1.200-2.500h2l1.200 2.500 1.500-2v4q-.5 1.500-3 1.500v1h3q-.5 1.500-3 1.800h-1q-3-.3-3.500-1.800h3.500v-1q-3 0-3.400-1.500z',fill:'#238a0c'});
add(names,'path',{d:'M702 755.500v-1.500h1v-6h1.500v-1h3v1h1.500v6h1v1.500zM704 750v1h3v-1z',fill:'#238a0c','fill-rule':'evenodd'});
add(names,'path',{d:'M598 534.500h9v4h-9zM602.500 530v4M603 531h2.500M599.500 538.500v1.500M605.500 538.500v1.500',fill:'none',stroke:'#6b4a35','stroke-width':1.500});

// Marks: label, colour, circle x, y, r, label x, y, box width
[['10','#4e79a7',424,147.500,13.500,424.500,121.500,22],['3','#4e79a7',391.500,225.500,7.300,391.500,204.500,11],['2','#e15759',417,455.500,6,417,437,11],['3','#e15759',472,448.500,7.200,471.500,428,11],['3','#e15759',497,458.500,7.200,496.500,438,11],['6','#e15759',573,420.500,10.300,573.500,397,12],['27','#59a14f',505.500,717,22,505.500,681.500,21]]
.forEach(([t,c,x,y,r,lx,ly,w]) => { add(map,'rect',{x:lx-w/2,y:ly-11.500,width:w,height:23,fill:'#f2f1f0','fill-opacity':.75}); add(map,'circle',{cx:x,cy:y,r,fill:c}); add(map,'text',{class:'mark-label',x:lx,y:ly+6.300,'font-size':15,fill:c,'text-anchor':'middle'},t); });
add(map,'rect',{x:23.500,y:98.500,width:964,height:685,fill:'none',stroke:'#e2e2e2','stroke-width':1});

// Donut of days per place
const donut = document.getElementById('donut');
let start = 0;
[[3,'#e15759'],[3,'#4e79a7'],[3,'#e15759'],[10,'#4e79a7'],[27,'#59a14f'],[6,'#e15759'],[2,'#e15759']].forEach(([days,fill]) => {
  const end = start + days / 54 * 2 * Math.PI, at = (r,a) => (1307.600 + r*Math.sin(a)).toFixed(2) + ' ' + (295 - r*Math.cos(a)).toFixed(2), big = days >= 27 ? 1 : 0;
  add(donut,'path',{d:`M${at(135.300,start)}A135.300 135.300 0 ${big} 1 ${at(135.300,end)}L${at(82.300,end)}A82.300 82.300 0 ${big} 0 ${at(82.300,start)}Z`,fill,stroke:'#111','stroke-width':1});
  start = end;
});
[['2','3.70%',1274,131.500],['3','5.56%',1349,133.500],['3','5.56%',1394,149.500],['3','5.56%',1431,180.500],['6','11.11%',1210.500,153.500],['10','18.52%',1466.500,312.500],['27','50.00%',1203.500,414.500]]
.forEach(([n,p,x,y]) => { add(donut,'text',{x,y:y+4.500,'font-size':12.500,fill:'#000','text-anchor':'middle'},n); add(donut,'text',{x,y:y+22.300,'font-size':12.500,fill:'#000','text-anchor':'middle',textLength:p.length>5?43:36,lengthAdjust:'spacingAndGlyphs'},p); });
add(donut,'text',{x:1304,y:300.500,'font-size':14.500,fill:'#000','text-anchor':'middle',textLength:95,lengthAdjust:'spacingAndGlyphs'},'DAYS OF STAY');
</script>
</body>
</html>
